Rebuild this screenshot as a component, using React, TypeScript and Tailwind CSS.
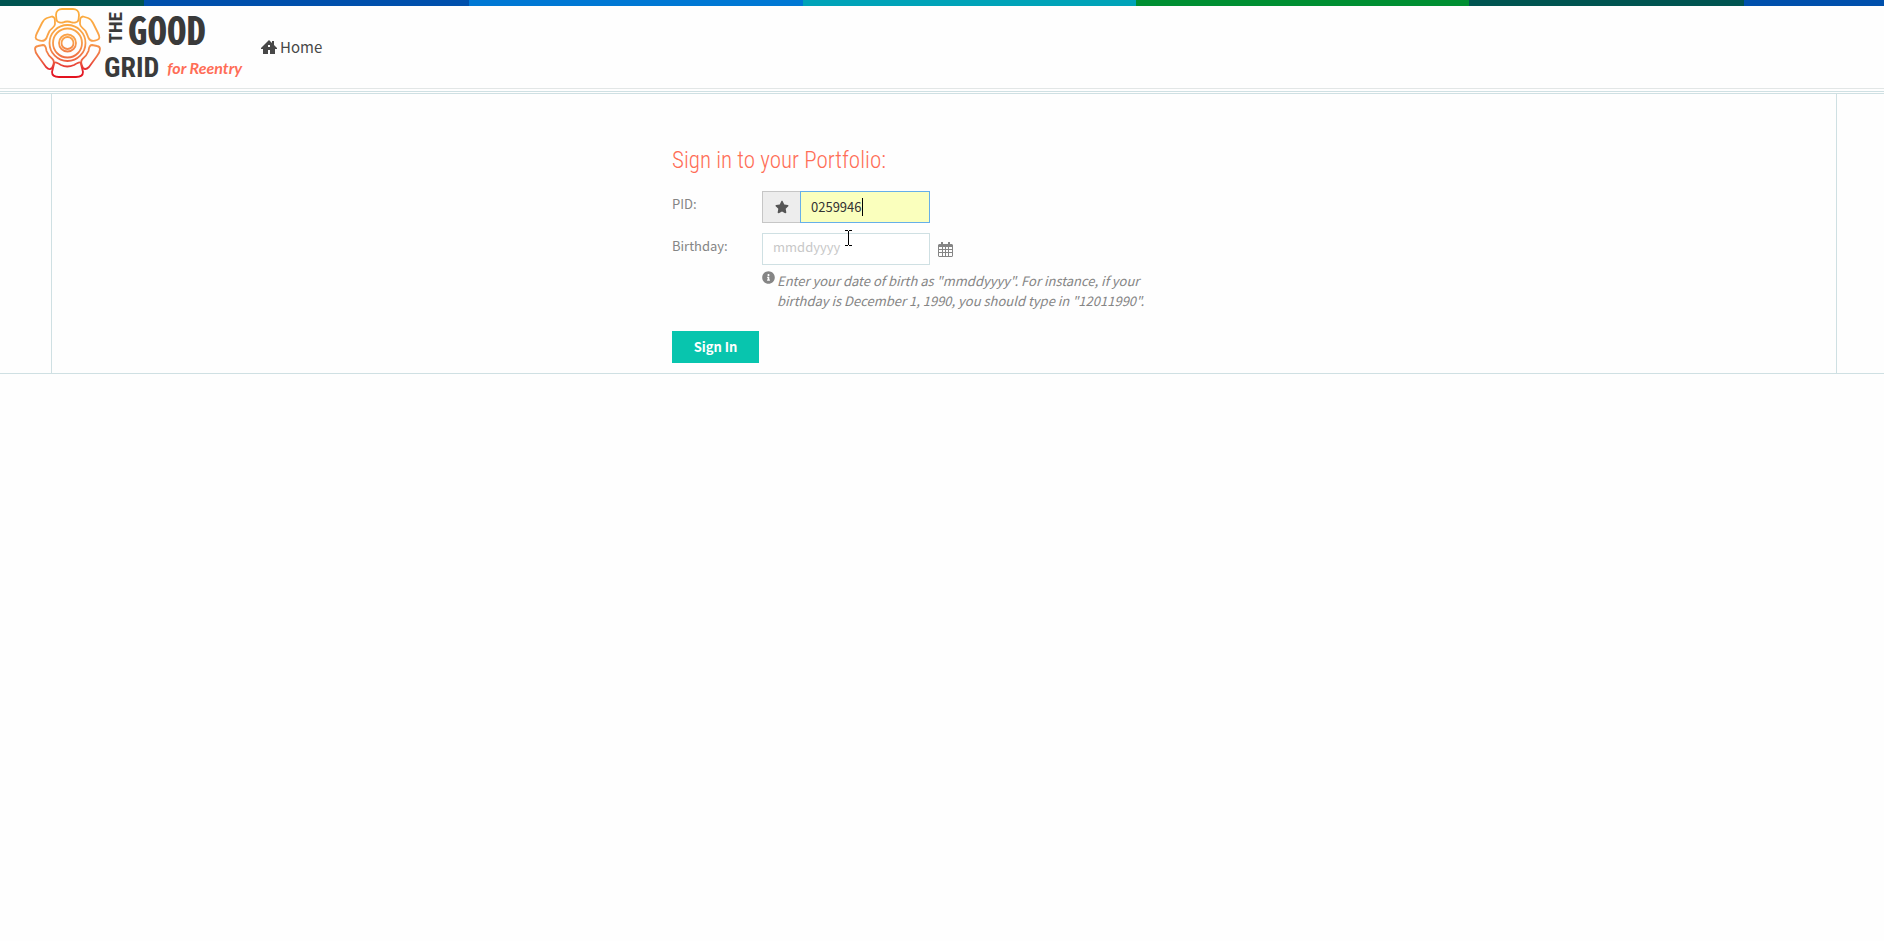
import { useEffect, useRef, useState } from "react";
import { FaInfoCircle, FaStar } from "react-icons/fa";

const STRIPES = [
  "w-[144px] bg-[#005451]",
  "w-[325px] bg-[#0050ac]",
  "w-[334px] bg-[#0078d4]",
  "w-[333px] bg-[#00a3b8]",
  "w-[333px] bg-[#008f32]",
  "w-[275px] bg-[#005451]",
];

function Petals() {
  return (
    <svg viewBox="0 0 68 72" className="h-[72px] w-[68px] shrink-0" fill="none" aria-hidden>
      <defs>
        <linearGradient id="petal" gradientUnits="userSpaceOnUse" x1="0" y1="2" x2="0" y2="70">
          <stop offset="0" stopColor="#fcae3c" />
          <stop offset="0.45" stopColor="#f9a04a" />
          <stop offset="0.72" stopColor="#ee6a45" />
          <stop offset="0.9" stopColor="#e3202c" />
          <stop offset="1" stopColor="#e3101c" />
        </linearGradient>
      </defs>
      <g stroke="url(#petal)" strokeWidth="1.8" strokeLinejoin="round">
        <circle cx="33.5" cy="35" r="6" />
        <circle cx="33.5" cy="35" r="8.5" />
        <circle cx="33.5" cy="35" r="14.5" />
        <circle cx="33.5" cy="35" r="18" />
        <path d="M22 7C22 3 25 1 28 1H39C42 1 45 3 45 7L44.5 12C44 14 41 15 38 14.5Q33 12.5 29 14.5C26 15 23 14 22.5 12Z" />
        <path d="M20 56C20 53 24 55 27 57Q33 60 40 57C43 55 47 53 47 56L49 64C49 68 45 69 42 69H25C21 69 18 68 18 64Z" />
        <path d="M13 10L18 8.5C21 9 21 11 21 16C21 19 18 20 15.5 23Q13.5 27 12.5 30C11 33 8 33.5 4 32C1 31 1 29 3 25L8 15Q10 11 13 10Z" />
        <path d="M54 10L49 8.5C46 9 46 11 46 16C46 19 49 20 51.5 23Q53.5 27 54.5 30C56 33 59 33.5 63 32C66 31 66 29 64 25L59 15Q57 11 54 10Z" />
        <path d="M4 38L9 37C12 37 12 40 12.5 43Q14.5 48 18.5 51C21 53 20 56 18 60C16 62 14 61 12 59L4 48Q1 44 1 41Q1 38.5 4 38Z" />
        <path d="M63 38L58 37C55 37 55 40 54.5 43Q52.5 48 48.5 51C46 53 47 56 49 60C51 62 53 61 55 59L63 48Q66 44 66 41Q66 38.5 63 38Z" />
      </g>
    </svg>
  );
}

function Logo() {
  return (
    <a href="#" className="flex items-start gap-0.5" aria-label="The Good Grid for Reentry">
      <Petals />
      <span className="flex flex-col gap-1 font-['Roboto_Condensed','Roboto',sans-serif] font-bold whitespace-nowrap text-[#3a3a3a]">
        <span className="flex h-10 items-center">
          <span className="w-6 rotate-180 text-[19px] leading-6 [writing-mode:vertical-rl]">THE</span>
          <span className="font-['Noto_Sans_Mono_CJK_SC',monospace] text-[39px] leading-10">GOOD</span>
        </span>
        <span className="flex h-8 items-center gap-2">
          <span className="text-[28px] leading-8">GRID</span>
          <span className="font-['Lato'] text-[16px] leading-6 text-[#ff6d56] italic">
            for Reentry
          </span>
        </span>
      </span>
    </a>
  );
}

function CalendarIcon() {
  return (
    <svg viewBox="0 0 15 15" className="size-[15px]" fill="currentColor" aria-hidden>
      <path
        fillRule="evenodd"
        d="M3 0H5V2H10V0H12V2H14L15 3V14L14 15H1L0 14V3L1 2H3ZM1 5V7H4V5ZM5 5V7H7V5ZM8 5V7H10V5ZM11 5V7H14V5ZM1 8V10H4V8ZM5 8V10H7V8ZM8 8V10H10V8ZM11 8V10H14V8ZM1 11V14H4V11ZM5 11V14H7V11ZM8 11V14H10V11ZM11 11V14H14V11Z"
      />
    </svg>
  );
}

function TextCursor() {
  return (
    <svg
      viewBox="0 0 7 16"
      className="pointer-events-none absolute top-[-3px] left-[83px] h-4 w-[7px]"
      shapeRendering="crispEdges"
      aria-hidden
    >
      <path d="M0 0H3V1H4V0H7V1H4V15H7V16H4V15H3V16H0V15H3V1H0Z" fill="#000" />
    </svg>
  );
}

export default function App() {
  const [pid, setPid] = useState("0259946");
  const [birthday, setBirthday] = useState("");
  const pidRef = useRef<HTMLInputElement>(null);

  useEffect(() => {
    const el = pidRef.current;
    el?.focus();
    el?.setSelectionRange(el.value.length, el.value.length);
  }, []);

  return (
    <div className="min-h-screen bg-[#fefefe] font-['Noto_Sans_CJK_SC',sans-serif] text-[13px] text-[#858585]">
      <div className="flex h-1.5 overflow-hidden bg-[#0050ac]">
        {STRIPES.map((stripe, i) => (
          <div key={i} className={`shrink-0 ${stripe}`} />
        ))}
      </div>

      <header className="flex h-[83px] border-b border-[#e2e6e6] pl-[34px]">
        <div className="flex w-[227px] items-start pt-0.5">
          <Logo />
        </div>
        <nav className="pt-[29px]">
          <a href="#" className="flex items-center gap-[3px] text-[15px] leading-6 text-[#484848]">
            <svg viewBox="0 0 16 14" className="h-3.5 w-4" fill="currentColor" aria-hidden>
              <path
                fillRule="evenodd"
                d="M8 0L11 3V1H13V5L16 8V9H14V14H9V10H7V14H2V9H0V8ZM7 5V7H9V5Z"
              />
            </svg>
            Home
          </a>
        </nav>
      </header>

      <main className="mt-0.5 border-y border-[#cfe0e3]">
        <div className="mt-px border-t border-[#cfe0e3] pr-[47px] pl-[51px]">
          <div className="border-x border-[#cfe0e3] pt-[51px] pb-[10px]">
            <form className="mx-auto w-[544px]" onSubmit={(e) => e.preventDefault()}>
              <h1 className="font-['Roboto_Condensed','Roboto',sans-serif] text-[23px] leading-8 font-light text-[#ff6d56]">
                Sign in to your Portfolio:
              </h1>

              <div className="mt-3.5 flex">
                <label htmlFor="pid" className="w-[90px] pt-[3px] leading-5">
                  PID:
                </label>
                <div className="relative flex h-8 w-[168px]">
                  <span className="flex w-[38px] items-center justify-center border border-r-0 border-[#c6c6c6] bg-[#ededed] text-[#555]">
                    <FaStar className="size-3.5" aria-hidden />
                  </span>
                  <input
                    id="pid"
                    ref={pidRef}
                    value={pid}
                    onChange={(e) => setPid(e.target.value)}
                    className="min-w-0 flex-1 border border-[#66afe9] bg-[#faffbd] px-2.5 text-[#333] caret-transparent outline-none"
                  />
                  {/* Caret, sits right after the entered text */}
                  <span className="pointer-events-none absolute top-[7px] left-[49px] flex" aria-hidden>
                    <span className="invisible h-[18px]">{pid}</span>
                    <span className="h-[18px] w-px bg-black" />
                  </span>
                </div>
              </div>

              {/* Birthday */}
              <div className="mt-2.5 flex">
                <label htmlFor="birthday" className="w-[90px] pt-[3px] leading-5">
                  Birthday:
                </label>
                <div className="relative flex items-center gap-2">
                  <input
                    id="birthday"
                    placeholder="mmddyyyy"
                    value={birthday}
                    onChange={(e) => setBirthday(e.target.value)}
                    className="h-8 w-[168px] border border-[#cfe0e3] bg-white px-2.5 pb-1.5 text-[#333] outline-none placeholder:text-[#c8c8c8]"
                  />
                  <button type="button" aria-label="Pick a date">
                    <CalendarIcon />
                  </button>
                  <TextCursor />
                </div>
              </div>

              <p className="mt-1.5 ml-[90px] flex gap-0.5 leading-5 whitespace-nowrap italic">
                <FaInfoCircle className="size-[13px] shrink-0" aria-hidden />
                <span>
                  Enter your date of birth as "mmddyyyy". For instance, if your
                  <br />
                  birthday is December 1, 1990, you should type in "12011990".
                </span>
              </p>

              <button type="submit" className="mt-5 block h-8 w-[87px] bg-[#08c5ae] font-bold text-white">
                Sign In
              </button>
            </form>
          </div>
        </div>
      </main>
    </div>
  );
}
